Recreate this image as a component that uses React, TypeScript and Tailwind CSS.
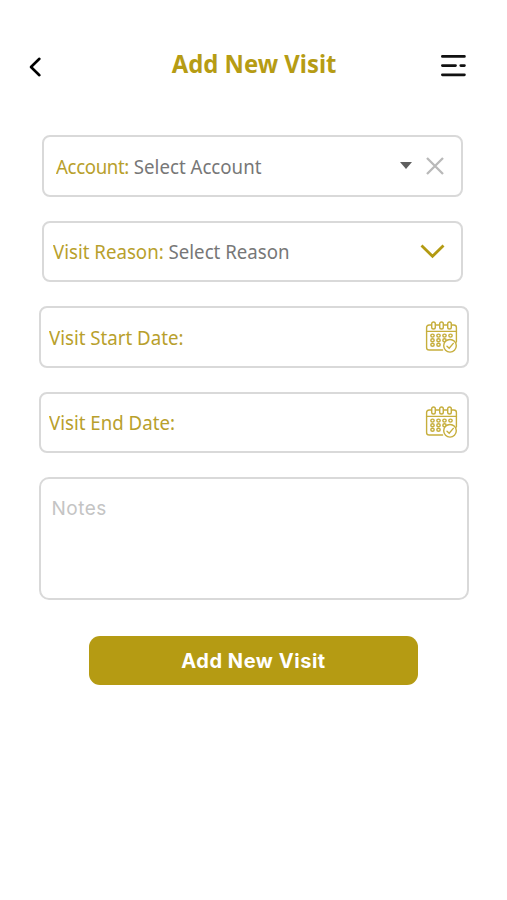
import React from "react";

const labelFont = "font-['Noto_Sans',sans-serif] text-[20.5px] leading-7 whitespace-nowrap";

function CalendarIcon() {
  const dots = [
    [7.5, 14.6], [13.5, 14.6], [19.5, 14.6], [25.5, 14.6],
    [7.5, 19.2], [13.5, 19.2], [19.5, 19.2],
    [7.5, 23.8], [13.5, 23.8],
  ];

  return (
    <svg width="33" height="33" viewBox="0 0 33 33" fill="none" stroke="#c6ae3c" strokeWidth="1.4" strokeLinecap="round">
      <path d="M6.5 4H4.2Q1.6 4 1.6 6.6V26.4Q1.6 29 4.2 29H17.6M10.5 4H14.5M18.5 4H22.5M26.5 4H28.8Q31.4 4 31.4 6.6V21" />
      <path d="M1.6 10.4H31.4" />
      {[8.5, 16.5, 24.5].map((x) => (
        <rect key={x} x={x - 1.8} y="1" width="3.6" height="7" rx="1.8" />
      ))}
      {dots.map(([x, y]) => (
        <ellipse key={`${x}-${y}`} cx={x} cy={y} rx="1.7" ry="1.5" />
      ))}
      <circle cx="25" cy="24.8" r="6.3" fill="white" />
      <path d="M22 25.2L24.2 27.2L28.3 22.4" />
    </svg>
  );
}

function DateField({ label }: { label: string }) {
  return (
    <div className="flex h-[61.5px] w-[430px] items-center justify-between rounded-lg border-2 border-[#d9d9d9] pl-[8px] pr-[9px]">
      <span className={`${labelFont} text-[#b8a02c]`}>
        <span className="inline-block origin-left scale-x-[0.91]">{label}</span>
      </span>
      <button title={label} className="mt-px">
        <CalendarIcon />
      </button>
    </div>
  );
}

export default function App() {
  return (
    <div className="flex h-[900px] w-[507px] flex-col items-center bg-white">
      {/* Header */}
      <header className="flex h-[135px] w-full items-start justify-between pl-[28px] pr-[40px]">
        <button title="Back" className="mt-[56px]">
          <svg width="14" height="22" viewBox="0 0 14 22" fill="none" stroke="black" strokeWidth="2.6" strokeLinecap="round" strokeLinejoin="round">
            <path d="M11.4 2.8L3 11L11.4 19.2" />
          </svg>
        </button>
        <h1 className="mt-[45px] ml-[27px] font-['Noto_Sans',sans-serif] text-[25.5px] font-bold leading-9 text-[#b69c14]">
          <span className="inline-block scale-x-[0.935]">Add New Visit</span>
        </h1>
        <button title="Menu" className="mt-[53px]">
          <svg width="27" height="25" viewBox="0 0 27 25" fill="none" stroke="#111" strokeWidth="2.8" strokeLinecap="round">
            <path d="M2.4 3.4H24.4M2.4 12.6H15.5M20.8 12.6H24.4M2.4 21.8H24.4" />
          </svg>
        </button>
      </header>

      <main className="flex w-full flex-col items-center">
        <div className="mr-[2px] flex h-[61.5px] w-[421px] items-center justify-between rounded-lg border-2 border-[#d9d9d9] pl-[12px] pr-[17px]">
          <span className={labelFont}>
            <span className="inline-block origin-left scale-x-[0.91] text-[#777]">
              <span className="tracking-[-0.4px] text-[#b8a02c]">Account:</span> Select Account
            </span>
          </span>
          <span className="flex items-center gap-[14px]">
            <svg width="12" height="7" viewBox="0 0 12 7" fill="#5f5f5f">
              <path d="M0 0H12L6 7Z" />
            </svg>
            <svg width="18" height="18" viewBox="0 0 18 18" stroke="#b9b9b9" strokeWidth="2.3">
              <path d="M1 1L17 17M17 1L1 17" />
            </svg>
          </span>
        </div>

        <div className="mt-6 mr-[2px] flex h-[61.5px] w-[421px] items-center justify-between rounded-lg border-2 border-[#d9d9d9] pl-[9px] pr-[16px]">
          <span className={labelFont}>
            <span className="inline-block origin-left scale-x-[0.91] text-[#777]">
              <span className="text-[#b8a02c]">Visit Reason:</span> Select Reason
            </span>
          </span>
          <svg className="mt-px" width="25" height="15" viewBox="0 0 25 15" fill="none" stroke="#b39a12" strokeWidth="2.8">
            <path d="M1.5 1.5L12.5 12.3L23.5 1.5" />
          </svg>
        </div>

        <div className="mt-6 flex flex-col gap-6">
          <DateField label="Visit Start Date:" />
          <DateField label="Visit End Date:" />
          <div className="h-[122.5px] w-[430px] rounded-[10px] border-2 border-[#d9d9d9] px-[11px] pt-[16px] font-['Inter',sans-serif] text-[19px] leading-7 tracking-[0.5px] text-[#c4c4c4]">
            Notes
          </div>
        </div>

        <button className="mt-9 h-[49px] w-[329px] rounded-[11px] bg-[#b59b13] pt-px font-['Inter',sans-serif] text-xl font-bold tracking-[0.55px] text-white">
          Add New Visit
        </button>
      </main>
    </div>
  );
}
